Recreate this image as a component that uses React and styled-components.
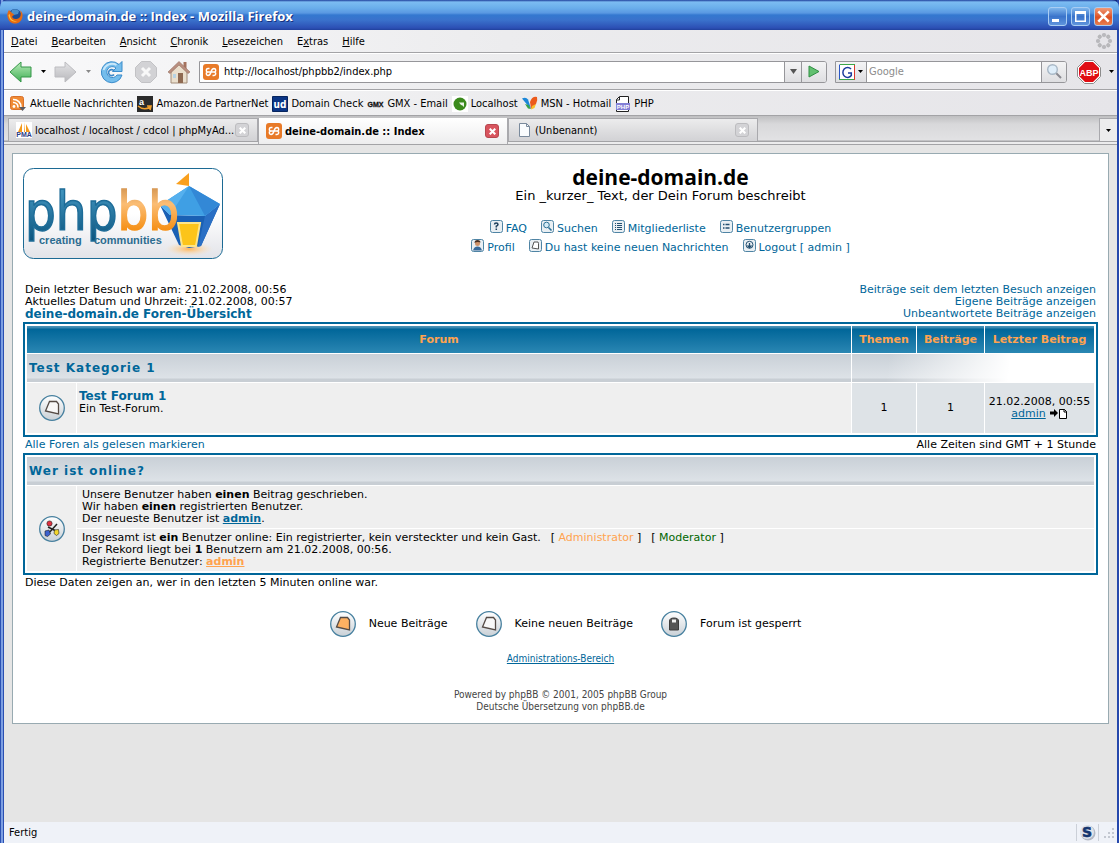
import React, { useState } from 'react'
import styled, { createGlobalStyle, css } from 'styled-components'

const uiFont = '"DejaVu Sans Condensed", "Open Sans", sans-serif'
const pageFont = '"DejaVu Sans", sans-serif'

const GlobalStyle = createGlobalStyle`
  * {
    box-sizing: border-box;
  }
  body {
    margin: 0;
    font-family: ${uiFont};
    font-size: 11px;
    color: #000;
  }
  button {
    font: inherit;
    color: inherit;
    border: 0;
    padding: 0;
    background: none;
  }
  svg {
    display: block;
    flex: none;
  }
`

const Window = styled.div`
  display: flex;
  flex-direction: column;
  min-height: 100vh;
  padding: 0 2px 0 4px;
  background: linear-gradient(#14267c 30px, #e5e5e5 30px);
  box-shadow: inset 1px 0 0 #2c52b4, inset 3px 0 0 #7d9fe2,
    inset 4px 0 0 #2a4fb2, inset -2px 0 0 #2548ac;
`

const TitleBar = styled.header`
  display: flex;
  align-items: center;
  height: 30px;
  margin: 0 -2px 0 -4px;
  padding: 2px 6px 0 7px;
  gap: 4px;
  color: #fff;
  border-radius: 7px 7px 0 0;
  background: linear-gradient(
    #1f3f9c 0,
    #7cbcf2 2px,
    #6aaeeb 8px,
    #5a98e2 13px,
    #3478d0 15px,
    #3a72cc 20px,
    #2c4fb4 28px,
    #20409c 30px
  );
  h1 {
    flex: 1;
    margin: 0;
    font: bold 13px/18px 'Open Sans', sans-serif;
    text-shadow: 1px 1px 0 #17317e;
  }
`

const WindowButton = styled.button`
  display: flex;
  align-items: center;
  justify-content: center;
  width: 19px;
  height: 19px;
  border: 1px solid #a9cdf3;
  border-radius: 3px;
  background: ${({ $close }) =>
    $close
      ? 'linear-gradient(#f09a78, #dc5024 55%, #e88050)'
      : 'linear-gradient(#7eb6ec, #3b74cb 50%, #5f94dc)'};
`

const WindowButtons = styled.div`
  display: flex;
  gap: 4px;
`

const bar = css`
  display: flex;
  align-items: center;
  background: linear-gradient(90deg, #f9f9fa, #ececee 45%, #e6e5e9);
  border-bottom: 1px solid #a3a3a6;
`

const MenuBar = styled.nav`
  ${bar}
  height: 23px;
  padding: 0 5px 0 7px;
  gap: 14px;
  svg {
    margin-left: auto;
  }
`

const NavBar = styled.div`
  ${bar}
  height: 37px;
  padding: 0 3px 0 5px;
  border-top: 1px solid #fff;
`

const IconButton = styled.button`
  margin-right: ${({ $gap = 0 }) => $gap}px;
`

const Field = styled.form`
  display: flex;
  align-items: stretch;
  height: 22px;
  flex: ${({ $grow }) => ($grow ? '1 1 300px' : '0 1 232px')};
  min-width: 0;
  margin-right: ${({ $gap }) => $gap}px;
  border: 1px solid #96969a;
  border-radius: 0 3px 3px 0;
  background: #fff;
  overflow: hidden;
  label {
    display: flex;
    align-items: center;
    padding: 0 3px;
  }
  input {
    flex: 1;
    min-width: 0;
    border: 0;
    padding: 0 2px;
    outline: 0;
    font: 11px ${uiFont};
    background: #fff;
    &::placeholder {
      color: #8c8c8c;
      opacity: 1;
    }
  }
`

const FieldButton = styled.button`
  display: flex;
  align-items: center;
  justify-content: center;
  gap: 3px;
  width: ${({ $width }) => $width}px;
  background: linear-gradient(#f4f4f5, #dedee1);
  border: solid #96969a;
  border-width: ${({ $first }) => ($first ? '0 1px 0 0' : '0 0 0 1px')};
`

const BookmarkBar = styled.nav`
  ${bar}
  height: 26px;
  padding: 1px 6px 0;
  gap: 4px;
  border-top: 1px solid #fff;
  a {
    display: flex;
    align-items: center;
    gap: 3px;
    color: #000;
    text-decoration: none;
    white-space: nowrap;
  }
`

const TabStrip = styled.div`
  display: flex;
  align-items: flex-end;
  height: 29px;
  padding: 2px 0 0 4px;
  background: linear-gradient(#bfbfc1, #d8d8da 8px, #e2e2e4 24px, #a3a3a6 25px, #a3a3a6 26px, #ececed 26px);
  border-bottom: 1px solid #a3a3a6;
`

const Tab = styled.div`
  display: flex;
  align-items: center;
  align-self: flex-start;
  flex: 0 1 250px;
  min-width: 0;
  height: ${({ $active }) => ($active ? 26 : 23)}px;
  padding: 0 8px 0 7px;
  border: solid #a9a9ad;
  border-width: ${({ $active }) => ($active ? '0 1px' : '1px 1px 0')};
  background: ${({ $active }) =>
    $active
      ? 'linear-gradient(#fff, #ededee)'
      : 'linear-gradient(#ececed, #dcdcde 60%, #d2d2d5)'};
`

const TabLabel = styled.button`
  display: flex;
  align-items: center;
  gap: 3px;
  flex: 1;
  min-width: 0;
  text-align: left;
  white-space: nowrap;
  font-weight: ${({ $active }) => ($active ? 'bold' : 'normal')};
`

const CloseButton = styled.button`
  display: flex;
  align-items: center;
  justify-content: center;
  flex: none;
  width: 14px;
  height: 14px;
  border-radius: 3px;
  border: 1px solid ${({ $active }) => ($active ? '#b8474f' : '#bcbcbf')};
  background: ${({ $active }) => ($active ? '#d8545e' : '#d3d3d6')};
`

const TabList = styled.button`
  display: flex;
  align-items: center;
  justify-content: center;
  align-self: flex-start;
  width: 18px;
  height: 23px;
  margin-left: auto;
  border: solid #a9a9ad;
  border-width: 1px 0 0 1px;
  background: #ececed;
`

const StatusBar = styled.footer`
  display: flex;
  align-items: center;
  height: 21px;
  margin-top: auto;
  padding: 0 2px 0 5px;
  background: #eff2f8;
  span {
    flex: 1;
  }
`

const StatusIcon = styled.div`
  padding: 0 2px;
  border: solid #cbd0d8;
  border-width: 0 1px;
`

const Board = styled.main`
  margin: 8px;
  padding: 14px 10px 10px;
  border: 1px solid #98aab1;
  background: #fff;
  font: 11px/12px ${pageFont};
`

const BoardHeader = styled.div`
  display: flex;
  align-items: flex-start;
  margin-bottom: 25px;
`

const Heading = styled.div`
  flex: 1;
  text-align: center;
  h2 {
    margin: 0;
    font: bold 21px/18px 'Open Sans', sans-serif;
  }
  p {
    margin: 0 0 14px;
    font-size: 13px;
    line-height: 20px;
  }
`

const MenuRow = styled.div`
  display: flex;
  justify-content: center;
  gap: 14px;
  height: 19px;
`

const PageLink = styled.a`
  color: ${({ $color = '#006699' }) => $color};
  font-weight: ${({ $bold }) => ($bold ? 'bold' : 'normal')};
  text-decoration: ${({ $underline }) => ($underline ? 'underline' : 'none')};
`

const MenuLink = styled(PageLink)`
  display: flex;
  align-items: flex-start;
  gap: 3px;
  span {
    padding-top: 3px;
  }
`

const Spread = styled.div`
  display: flex;
  justify-content: space-between;
  align-items: flex-end;
  padding: 0 2px;
  margin-bottom: ${({ $gap = 0 }) => $gap}px;
  > :last-child:not(:first-child) {
    text-align: right;
  }
`

const BoardName = styled(PageLink)`
  display: block;
  font-size: 12px;
`

const ForumTable = styled.table`
  width: 100%;
  padding: 1px;
  border: 2px solid #006699;
  border-spacing: 1px;
  margin-bottom: 2px;
  td {
    padding: 0;
    background: #efefef;
  }
`

const HeadCell = styled.th`
  width: ${({ $width }) => $width};
  height: 27px;
  padding: 0;
  color: #ffa34f;
  white-space: nowrap;
  background: linear-gradient(#4a94b8 0, #3484ae 2px, #006699 3px, #1b7aa9 18px, #2a87b3);
`

const categoryFill = 'linear-gradient(#c9d0d7, #dde2e7 24px, #c8ced4 25px)'

const CategoryCell = styled.th`
  height: 28px;
  padding: 0 2px;
  color: #006699;
  font-size: 12px;
  letter-spacing: 1px;
  text-align: left;
  background: ${categoryFill};
`

const FadeCell = styled.th`
  padding: 0;
  background: linear-gradient(97deg, rgba(255, 255, 255, 0) 15%, #fff 65%), ${categoryFill};
`

const IconCell = styled.td`
  width: 49px;
  svg {
    margin: 0 auto;
  }
`

const ForumCell = styled.td`
  height: 50px;
  vertical-align: top;
  && {
    padding: 6px 2px;
  }
  a {
    display: block;
    font-size: 12px;
    line-height: 14px;
  }
`

const CountCell = styled.td`
  text-align: center;
  && {
    background: #dee3e7;
  }
`

const LastPost = styled.div`
  display: flex;
  justify-content: center;
  gap: 4px;
`

const OnlineCell = styled.td`
  height: 42px;
  && {
    padding: 0 5px;
  }
`

const Group = styled.span`
  margin-left: 10px;
`

const Legend = styled.ul`
  display: flex;
  justify-content: center;
  gap: 28px;
  margin: 22px 0 16px;
  padding: 0 0 0 10px;
  list-style: none;
  li {
    display: flex;
    align-items: center;
    gap: 13px;
  }
`

const Copyright = styled.div`
  text-align: center;
  font-family: ${uiFont};
  font-size: 10px;
  color: #444;
  p {
    margin: 24px 0 0;
  }
`

const Arrow = ({ color = '#000' }) => (
  <svg width='5' height='3' viewBox='0 0 5 3'>
    <path d='M0 0h5L2.5 3z' fill={color} />
  </svg>
)

const Cross = ({ size, width = 2 }) => (
  <svg width={size} height={size} viewBox='0 0 10 10'>
    <path d='M1 1l8 8M9 1l-8 8' stroke='#fff' strokeWidth={width} />
  </svg>
)

const Firefox = () => (
  <svg width='16' height='16' viewBox='0 0 16 16'>
    <circle cx='8' cy='7.5' r='6.5' fill='#1b4c96' />
    <path d='M5 2q4-2 7 1l-1 3-4 1-3-2z' fill='#4a91cb' />
    <path d='M2 2C-1 6 0 13 5 15s10-1 10.500-7C16 5 14 3 13 2.500 15 7 13 11 9.500 11 6 11.500 4 9 6 7.500L7.500 7 5 5z' fill='#e66a12' />
    <path d='M1.500 7C2 12 6 14.500 10 13.500 6 13 3 11 3 6z' fill='#ffc13b' />
  </svg>
)

const Back = ({ forward }) => (
  <svg width='23' height='22' viewBox='0 0 23 22'>
    <defs>
      <linearGradient id={forward ? 'fwd' : 'back'} x2='0' y2='1'>
        <stop stopColor={forward ? '#e4e4e6' : '#b9ecb9'} />
        <stop offset='1' stopColor={forward ? '#b8b8bc' : '#3fae55'} />
      </linearGradient>
    </defs>
    <path
      d='M1 11L12 1v5h10v10H12v5z'
      transform={forward ? 'matrix(-1 0 0 1 23 0)' : undefined}
      fill={`url(#${forward ? 'fwd' : 'back'})`}
      stroke={forward ? '#bcbcc0' : '#359648'}
    />
  </svg>
)

const Reload = () => (
  <svg width='24' height='24' viewBox='0 0 24 24'>
    <path d='M22 1.500v10h-9.500l3.500-3.500a5.500 5.500 0 1 0 1 7h5A10.500 10.500 0 1 1 19 4.500z' fill='#74bdec' stroke='#3b8ccb' />
    <path d='M3.500 10a9 9 0 0 1 13-5' fill='none' stroke='#c9e7f9' strokeWidth='2' />
    <path d='M14 10.800a3 3 0 1 0 0 3.600' fill='none' stroke='#3d88c8' strokeWidth='1.600' />
  </svg>
)

const Stop = () => (
  <svg width='24' height='24' viewBox='0 0 24 24'>
    <path d='M7.500 1.500h9l6 6v9l-6 6h-9l-6-6v-9z' fill='#d2d2d5' stroke='#c2c2c5' />
    <path d='M8 8l8 8M16 8l-8 8' stroke='#f8f8f8' strokeWidth='3' />
  </svg>
)

const Home = () => (
  <svg width='24' height='24' viewBox='0 0 24 24'>
    <path d='M16.500 2h3v7h-3z' fill='#a5735e' />
    <path d='M4 11.500L12 4l8 7.500V23H4z' fill='#eadfcd' stroke='#a28c78' />
    <path d='M1 12L12 1.500 23 12l-2 1.500L12 5 3 13.500z' fill='#b98f80' stroke='#966f60' strokeWidth='.6' />
    <path d='M11 13h5v10h-5z' fill='#8f6a52' />
    <path d='M6 14h3v4H6z' fill='#b7d3e4' />
  </svg>
)

const Xampp = () => (
  <svg width='16' height='16' viewBox='0 0 16 16'>
    <rect width='16' height='16' rx='3' fill='#e87a28' />
    <path d='M6.500 4.500H5a1.800 1.800 0 0 0-.5 3.500 1.800 1.800 0 0 0 .5 3.500q2 0 3-3.500t3-3.500a1.800 1.800 0 0 1 .5 3.500 1.800 1.800 0 0 1-.5 3.500H9.500M5 8h6' fill='none' stroke='#fff' strokeWidth='1.500' />
  </svg>
)

const Play = () => (
  <svg width='12' height='13' viewBox='0 0 12 13'>
    <path d='M1 1l10 5.500L1 12z' fill='#62c070' stroke='#2f8f42' />
  </svg>
)

const Google = () => (
  <svg width='16' height='16' viewBox='0 0 16 16'>
    <path d='M0 0h16v16H0z' fill='#fff' />
    <path d='M.5 16V.5' stroke='#2a56c6' />
    <path d='M1 .5h15' stroke='#3aa648' />
    <path d='M15.500 1v15' stroke='#d83a2c' />
    <path d='M0 15.500h15' stroke='#3aa648' />
    <path d='M12 5A4.700 5 0 1 0 12.300 11.500V9H9' fill='none' stroke='#1c3c9c' strokeWidth='1.500' />
  </svg>
)

const Magnifier = () => (
  <svg width='17' height='17' viewBox='0 0 17 17'>
    <path d='M10 10l5 5' stroke='#8a8a90' strokeWidth='2' />
    <circle cx='6.500' cy='6.500' r='4.800' fill='#dfeefa' stroke='#a9b8c6' strokeWidth='1.400' />
  </svg>
)

const AdBlock = () => (
  <svg width='24' height='24' viewBox='0 0 24 24'>
    <path d='M7.500.5h9l7 7v9l-7 7h-9l-7-7v-9z' fill='#fff' stroke='#8c8c8c' />
    <path d='M8 2h8l6 6v8l-6 6H8l-6-6V8z' fill='#e00d13' />
    <text x='12' y='15.500' textAnchor='middle' fill='#fff' fontFamily='Liberation Sans' fontWeight='bold' fontSize='9'>ABP</text>
  </svg>
)

const Throbber = () => (
  <svg width='16' height='16' viewBox='0 0 16 16' fill='#b9b9bc' stroke='#a4a4a8' strokeWidth='.4'>
    {[0, 45, 90, 135, 180, 225, 270, 315].map(a => (
      <circle key={a} cx='8' cy='2' r='1.800' transform={`rotate(${a} 8 8)`} />
    ))}
  </svg>
)

const Feed = () => (
  <svg width='17' height='16' viewBox='0 0 17 16'>
    <rect x='.5' y='.5' width='13' height='13' rx='2' fill='#f08a34' stroke='#d8702a' />
    <path d='M3 3.500a7.500 7.500 0 0 1 8 8M3 6.500a4.500 4.500 0 0 1 5 5' fill='none' stroke='#fff' strokeWidth='1.600' />
    <circle cx='4' cy='10.500' r='1.400' fill='#fff' />
    <path d='M9 11h7l-3.500 4z' fill='#5a5a60' />
  </svg>
)

const Amazon = () => (
  <svg width='16' height='16' viewBox='0 0 16 16'>
    <path d='M0 0h16v16H0z' fill='#2b2b2b' />
    <text x='2' y='9' fill='#fff' fontFamily='Liberation Sans' fontWeight='bold' fontSize='9'>a</text>
    <path d='M1 10q6 5 12 1M10 10h4l-1 4' fill='none' stroke='#f3a02c' strokeWidth='1.600' />
  </svg>
)

const Domain = () => (
  <svg width='16' height='16' viewBox='0 0 16 16'>
    <path d='M.5.5h15v15H.5z' fill='#0b3585' stroke='#07255e' />
    <text x='8' y='12' textAnchor='middle' fill='#fff' fontFamily='DejaVu Sans Condensed' fontWeight='bold' fontSize='10'>ud</text>
  </svg>
)

const Gmx = () => (
  <svg width='17' height='16' viewBox='0 0 17 16'>
    <text x='8.500' y='10.500' textAnchor='middle' fill='#111' stroke='#111' strokeWidth='.3' fontFamily='Liberation Sans' fontWeight='bold' fontSize='7'>GMX</text>
  </svg>
)

const Localhost = () => (
  <svg width='16' height='16' viewBox='0 0 16 16'>
    <path d='M0 0h16v16H0z' fill='#fff' />
    <circle cx='8' cy='8' r='6.500' fill='#3b8a1c' />
    <path d='M7 6.500h5V11L10.500 9.500 9 9z' fill='#eaf4e6' />
  </svg>
)

const Msn = () => (
  <svg width='16' height='16' viewBox='0 0 16 16'>
    <path d='M0 2.500q4-2 6 1l3 9-4-4z' fill='#1c87d8' />
    <path d='M3 8l3.500 1L9 13l-3-.5z' fill='#35a24a' />
    <path d='M15 1q1 3-1 7l-5 5-1-7q2-6 7-5z' fill='#ec5a1c' />
    <path d='M14 8l-1.500 4L9 13.500 10 10z' fill='#f8c12a' />
  </svg>
)

const Php = () => (
  <svg width='16' height='16' viewBox='0 0 16 16'>
    <path d='M4.500.5h9v15h-12v-12z' fill='#fff' stroke='#222' />
    <path d='M1.500 4h3V1' fill='none' stroke='#222' />
    <path d='M1 7h14v7H1z' fill='#8380d6' />
    <text x='8' y='13' textAnchor='middle' fill='#fff' fontFamily='Liberation Sans' fontWeight='bold' fontSize='6'>PHP</text>
  </svg>
)

const Pma = () => (
  <svg width='16' height='16' viewBox='0 0 16 16'>
    <path d='M0 0h16v16H0z' fill='#fff' />
    <path d='M6 1v9H2zM8 0v10h1zM10 2l4 8h-4z' fill='#f49a1c' />
    <text x='8' y='15' textAnchor='middle' fill='#2c3c86' fontFamily='Liberation Sans' fontWeight='bold' fontSize='7'>PMA</text>
  </svg>
)

const BlankPage = () => (
  <svg width='16' height='16' viewBox='0 0 16 16'>
    <path d='M3.500 1.500h7l3 3v10h-10z' fill='#fafcfe' stroke='#7a8a9c' />
    <path d='M10.500 1.500v3h3' fill='none' stroke='#7a8a9c' />
  </svg>
)

const StatusS = () => (
  <svg width='17' height='17' viewBox='0 0 17 17'>
    <circle cx='9' cy='9' r='7.500' fill='#b4b9c4' />
    <circle cx='8' cy='8' r='7' fill='#dfe4ec' />
    <text x='8' y='13' textAnchor='middle' fill='#15356f' stroke='#15356f' strokeWidth='.6' fontFamily='DejaVu Sans' fontWeight='bold' fontSize='14'>S</text>
  </svg>
)

const Grip = () => (
  <svg width='16' height='12' viewBox='-4 0 16 12' fill='#c3c8d1'>
    <path d='M9 1h2v2H9zM5 5h2v2H5zM9 5h2v2H9zM1 9h2v2H1zM5 9h2v2H5zM9 9h2v2H9z' />
  </svg>
)

const menuGlyphs = {
  faq: (
    <path d='M4.500 4.500Q4.500 3 6.200 3T8 4.600Q8 5.500 6.300 6.200V7.500M6.300 8.500v1.500' fill='none' stroke='#1c3f5c' strokeWidth='1.500' />
  ),
  search: (
    <g fill='none' stroke='#2d7296'>
      <circle cx='5.500' cy='5' r='2.800' fill='#d5ecf7' />
      <path d='M7.500 7.500l3 3' strokeWidth='1.600' />
    </g>
  ),
  members: <path d='M3 3.500h1M5 3.500h5M3 5.500h1M5 5.500h5M3 7.500h1M5 7.500h5M3 9.500h1M5 9.500h5' stroke='#234f70' />,
  groups: <path d='M3 4.500h1.500M5.500 4.500h4M3 8h1.500M5.500 8h4' stroke='#234f70' strokeWidth='1.600' />,
  profile: (
    <g>
      <circle cx='6.500' cy='4.500' r='2.500' fill='#cf936a' />
      <path d='M3.500 4q0-3 3-3t3 2.500Q6 2.500 3.500 4z' fill='#473024' />
      <path d='M2 11.500Q3 7.500 6.500 7.500T11 11.500z' fill='#37699a' />
    </g>
  ),
  messages: <path d='M3 9L5 3h4l.5 1.500V10z' fill='#fff' stroke='#555' />,
  logout: (
    <g fill='none' stroke='#234f70'>
      <circle cx='6.500' cy='5.800' r='3.500' />
      <path d='M6.500 4v4M4.500 6.500l2 2 2-2' strokeWidth='1.300' />
    </g>
  )
}

const MenuIcon = ({ name }) => (
  <svg width='13' height='13' viewBox='0 0 13 13'>
    <rect x='.5' y='.5' width='12' height='12' rx='2' fill='#e9eff3' stroke='#4f84a4' />
    {menuGlyphs[name]}
  </svg>
)

const sheet = 'M10.500 6.500h7l2 2.500v10l-13-3z'

const folderGlyphs = {
  old: <path d={sheet} fill='#f8f8f8' stroke='#554b46' strokeWidth='1.300' />,
  hot: <path d={sheet} fill='#ffb162' stroke='#554b46' strokeWidth='1.300' />,
  locked: (
    <g>
      <path d='M8.500 19V10q0-3 4.500-3t4.500 3v9z' fill='#555' stroke='#3c3c3c' />
      <path d='M11 8.500h4v3h-4z' fill='#f2f2f2' />
    </g>
  ),
  online: (
    <g stroke='#222' strokeWidth='.6'>
      <path d='M9 18l9-10M9 11l8 4' strokeWidth='1.500' />
      <circle cx='10.500' cy='7.500' r='2.600' fill='#e03040' />
      <path d='M6 15l4-1 1.500 4-3 2.500-2.500-1z' fill='#3b62cf' />
      <path d='M15.500 14l4-.5.5 4-2.500 2-2.500-2z' fill='#f3d62c' />
    </g>
  )
}

const FolderIcon = ({ name }) => (
  <svg width='26' height='26' viewBox='0 0 26 26'>
    <defs>
      <linearGradient id={`disc-${name}`} x2='0' y2='1'>
        <stop stopColor='#fff' />
        <stop offset='1' stopColor='#c9d0d6' />
      </linearGradient>
    </defs>
    <circle cx='13' cy='13' r='12.300' fill={`url(#disc-${name})`} stroke='#47809f' strokeWidth='1.300' />
    {folderGlyphs[name]}
  </svg>
)

const LatestIcon = () => (
  <svg width='18' height='11' viewBox='0 0 18 11'>
    <path d='M0 3.500h4V1l4 4-4 4V6.500H0z' />
    <path d='M9.500 1.500h5l2 2v7h-7z' fill='#fff' stroke='#000' />
    <path d='M14 1v3h3' fill='none' stroke='#000' />
  </svg>
)

const Logo = () => (
  <svg width='200' height='91' viewBox='0 0 200 91' role='img' aria-label='phpbb creating communities'>
    <defs>
      <linearGradient id='logo-bg' x2='0' y2='1'>
        <stop offset='.5' stopColor='#fff' />
        <stop offset='1' stopColor='#e2e3e8' />
      </linearGradient>
      <linearGradient id='logo-php' x2='0' y2='1'>
        <stop offset='.2' stopColor='#3f92bc' />
        <stop offset='1' stopColor='#0a527c' />
      </linearGradient>
      <linearGradient id='logo-bb' gradientUnits='userSpaceOnUse' x1='0' y1='14' x2='0' y2='63'>
        <stop stopColor='#c98a48' />
        <stop offset='.45' stopColor='#fbbd74' />
        <stop offset='1' stopColor='#f58e12' />
      </linearGradient>
      <radialGradient id='logo-glow'>
        <stop stopColor='#ffb454' />
        <stop offset='1' stopColor='#ffe0b8' stopOpacity='0' />
      </radialGradient>
    </defs>
    <rect x='.5' y='.5' width='199' height='90' rx='10' fill='url(#logo-bg)' stroke='#1c6a94' />
    <ellipse cx='166' cy='81' rx='24' ry='7' fill='url(#logo-glow)' />
    <path d='M166 5v13l-13-2z' fill='#f9a01e' />
    <path d='M137 37l10 10 35 1 15-12-19 42-12 2-10-3z' fill='#1a60b4' />
    <path d='M182 48l15-12-19 42-3 1z' fill='#2a6fc4' />
    <path d='M166 18l31 18-15 12-35-1-10-10z' fill='#3f9fe4' />
    <path d='M166 18l31 18-15 12z' fill='#3388d6' />
    <path d='M166 18l-19 29-10-10z' fill='#55b0ee' />
    <path d='M155 55h22l-4 23h-14z' fill='#fcc419' stroke='#fde58a' strokeWidth='2' />
    <text x='2' y='62' fontFamily='"DejaVu Sans Condensed", sans-serif' fontSize='54' strokeWidth='1.400'>
      <tspan fill='url(#logo-php)' stroke='#1d6c98'>php</tspan>
      <tspan fill='url(#logo-bb)' stroke='url(#logo-bb)'>bb</tspan>
    </text>
    <g fontFamily='"Liberation Sans", sans-serif' fontWeight='bold' fontSize='11' fill='#2c6c90'>
      <text x='16' y='76'>creating</text>
      <text x='71' y='76'>communities</text>
    </g>
  </svg>
)

const menus = ['Datei', 'Bearbeiten', 'Ansicht', 'Chronik', 'Lesezeichen', 'Extras', 'Hilfe']

const bookmarks = [
  ['Aktuelle Nachrichten', Feed],
  ['Amazon.de PartnerNet', Amazon],
  ['Domain Check', Domain],
  ['GMX - Email', Gmx],
  ['Localhost', Localhost],
  ['MSN - Hotmail', Msn],
  ['PHP', Php]
]

const tabs = [
  ['localhost / localhost / cdcol | phpMyAd...', Pma],
  ['deine-domain.de :: Index', Xampp],
  ['(Unbenannt)', BlankPage]
]

const boardMenu = [
  [
    ['FAQ', 'faq'],
    ['Suchen', 'search'],
    ['Mitgliederliste', 'members'],
    ['Benutzergruppen', 'groups']
  ],
  [
    ['Profil', 'profile'],
    ['Du hast keine neuen Nachrichten', 'messages'],
    ['Logout [ admin ]', 'logout']
  ]
]

const legend = [
  ['Neue Beiträge', 'hot'],
  ['Keine neuen Beiträge', 'old'],
  ['Forum ist gesperrt', 'locked']
]

function MenuItem ({ label }) {
  const at = label === 'Extras' ? 1 : 0
  return (
    <button type='button'>
      {label.slice(0, at)}
      <u>{label[at]}</u>
      {label.slice(at + 1)}
    </button>
  )
}

function Browser ({ children }) {
  const [url, setUrl] = useState('http://localhost/phpbb2/index.php')
  const [active, setActive] = useState(1)

  return (
    <Window>
      <TitleBar>
        <Firefox />
        <h1>deine-domain.de :: Index - Mozilla Firefox</h1>
        <WindowButtons>
          <WindowButton aria-label='Minimieren'>
            <svg width='13' height='13' viewBox='0 0 13 13'>
              <path d='M1 9h7v3H1z' fill='#fff' />
            </svg>
          </WindowButton>
          <WindowButton aria-label='Maximieren'>
            <svg width='13' height='13' viewBox='0 0 13 13'>
              <path d='M1 1h11v11H1zM2.500 4v6.500h8V4z' fill='#fff' fillRule='evenodd' />
            </svg>
          </WindowButton>
          <WindowButton $close aria-label='Schließen'>
            <Cross size={13} />
          </WindowButton>
        </WindowButtons>
      </TitleBar>
      <MenuBar>
        {menus.map(label => (
          <MenuItem key={label} label={label} />
        ))}
        <Throbber />
      </MenuBar>
      <NavBar>
        <IconButton aria-label='Zurück' $gap={9}><Back /></IconButton>
        <IconButton aria-label='Verlauf' $gap={8}><Arrow /></IconButton>
        <IconButton aria-label='Vor' $gap={9}><Back forward /></IconButton>
        <IconButton aria-label='Verlauf vorwärts' $gap={9}><Arrow color='#888' /></IconButton>
        <IconButton aria-label='Neu laden' $gap={10}><Reload /></IconButton>
        <IconButton aria-label='Stopp' $gap={9}><Stop /></IconButton>
        <IconButton aria-label='Startseite' $gap={8}><Home /></IconButton>
        <Field $grow $gap={8} onSubmit={e => e.preventDefault()}>
          <label htmlFor='url' aria-label='Adresse'><Xampp /></label>
          <input id='url' value={url} onChange={e => setUrl(e.target.value)} />
          <FieldButton type='button' $width={17} aria-label='Adressliste'>
            <svg width='7' height='5' viewBox='0 0 7 5'>
              <path d='M0 0h7L3.500 5z' fill='#555' />
            </svg>
          </FieldButton>
          <FieldButton $width={25} aria-label='Los'><Play /></FieldButton>
        </Field>
        <Field $gap={10} onSubmit={e => e.preventDefault()}>
          <FieldButton type='button' $first $width={31} aria-label='Suchmaschine'>
            <Google />
            <Arrow />
          </FieldButton>
          <input aria-label='Suche' placeholder='Google' />
          <FieldButton $width={25} aria-label='Suchen'><Magnifier /></FieldButton>
        </Field>
        <IconButton aria-label='Adblock Plus' $gap={8}><AdBlock /></IconButton>
        <IconButton aria-label='Adblock Menü'><Arrow /></IconButton>
      </NavBar>
      <BookmarkBar>
        {bookmarks.map(([label, Icon]) => (
          <a key={label} href='#bookmark'>
            <Icon />
            {label}
          </a>
        ))}
      </BookmarkBar>
      <TabStrip>
        {tabs.map(([label, Icon], i) => (
          <Tab key={label} $active={i === active}>
            <TabLabel $active={i === active} onClick={() => setActive(i)}>
              <Icon />
              {label}
            </TabLabel>
            <CloseButton $active={i === active} aria-label='Tab schließen'>
              <Cross size={7} width={3} />
            </CloseButton>
          </Tab>
        ))}
        <TabList aria-label='Alle Tabs'><Arrow /></TabList>
      </TabStrip>
      {children}
      <StatusBar>
        <span>Fertig</span>
        <StatusIcon><StatusS /></StatusIcon>
        <Grip />
      </StatusBar>
    </Window>
  )
}

function ForumList () {
  return (
    <ForumTable>
      <thead>
        <tr>
          <HeadCell colSpan={2}>Forum</HeadCell>
          <HeadCell $width='64px'>Themen</HeadCell>
          <HeadCell $width='67px'>Beiträge</HeadCell>
          <HeadCell $width='109px'>Letzter Beitrag</HeadCell>
        </tr>
      </thead>
      <tbody>
        <tr>
          <CategoryCell colSpan={2}>Test Kategorie 1</CategoryCell>
          <FadeCell colSpan={3} />
        </tr>
        <tr>
          <IconCell><FolderIcon name='old' /></IconCell>
          <ForumCell>
            <PageLink href='#forum' $bold>Test Forum 1</PageLink>
            Ein Test-Forum.
          </ForumCell>
          <CountCell>1</CountCell>
          <CountCell>1</CountCell>
          <CountCell>
            21.02.2008, 00:55
            <LastPost>
              <PageLink href='#admin' $underline>admin</PageLink>
              <LatestIcon />
            </LastPost>
          </CountCell>
        </tr>
      </tbody>
    </ForumTable>
  )
}

function WhoIsOnline () {
  return (
    <ForumTable>
      <thead>
        <tr>
          <CategoryCell colSpan={2}>Wer ist online?</CategoryCell>
        </tr>
      </thead>
      <tbody>
        <tr>
          <IconCell rowSpan={2}><FolderIcon name='online' /></IconCell>
          <OnlineCell>
            Unsere Benutzer haben <b>einen</b> Beitrag geschrieben.<br />
            Wir haben <b>einen</b> registrierten Benutzer.<br />
            Der neueste Benutzer ist <PageLink href='#admin' $bold $underline>admin</PageLink>.
          </OnlineCell>
        </tr>
        <tr>
          <OnlineCell>
            Insgesamt ist <b>ein</b> Benutzer online: Ein registrierter, kein versteckter und kein Gast.
            <Group>[ <PageLink href='#admins' $color='#ffa34f'>Administrator</PageLink> ]</Group>
            <Group>[ <PageLink href='#mods' $color='#006600'>Moderator</PageLink> ]</Group>
            <br />
            Der Rekord liegt bei <b>1</b> Benutzern am 21.02.2008, 00:56.<br />
            Registrierte Benutzer: <PageLink href='#admin' $bold $underline $color='#ffa34f'>admin</PageLink>
          </OnlineCell>
        </tr>
      </tbody>
    </ForumTable>
  )
}

export default function App () {
  return (
    <>
      <GlobalStyle />
      <Browser>
        <Board>
          <BoardHeader>
            <Logo />
            <Heading>
              <h2>deine-domain.de</h2>
              <p>Ein _kurzer_ Text, der Dein Forum beschreibt</p>
              {boardMenu.map((row, i) => (
                <MenuRow key={i}>
                  {row.map(([label, icon]) => (
                    <MenuLink key={icon} href={`#${icon}`}>
                      <MenuIcon name={icon} />
                      <span>{label}</span>
                    </MenuLink>
                  ))}
                </MenuRow>
              ))}
            </Heading>
          </BoardHeader>
          <Spread $gap={2}>
            <div>
              Dein letzter Besuch war am: 21.02.2008, 00:56<br />
              Aktuelles Datum und Uhrzeit: 21.02.2008, 00:57
              <BoardName href='#index' $bold>deine-domain.de Foren-Übersicht</BoardName>
            </div>
            <div>
              <PageLink href='#new'>Beiträge seit dem letzten Besuch anzeigen</PageLink><br />
              <PageLink href='#own'>Eigene Beiträge anzeigen</PageLink><br />
              <PageLink href='#unanswered'>Unbeantwortete Beiträge anzeigen</PageLink>
            </div>
          </Spread>
          <ForumList />
          <Spread $gap={2}>
            <PageLink href='#read'>Alle Foren als gelesen markieren</PageLink>
            <span>Alle Zeiten sind GMT + 1 Stunde</span>
          </Spread>
          <WhoIsOnline />
          <Spread>
            <span>Diese Daten zeigen an, wer in den letzten 5 Minuten online war.</span>
          </Spread>
          <Legend>
            {legend.map(([label, icon]) => (
              <li key={icon}>
                <FolderIcon name={icon} />
                {label}
              </li>
            ))}
          </Legend>
          <Copyright>
            <PageLink href='#acp' $underline>Administrations-Bereich</PageLink>
            <p>
              Powered by phpBB © 2001, 2005 phpBB Group<br />
              Deutsche Übersetzung von phpBB.de
            </p>
          </Copyright>
        </Board>
      </Browser>
    </>
  )
}
